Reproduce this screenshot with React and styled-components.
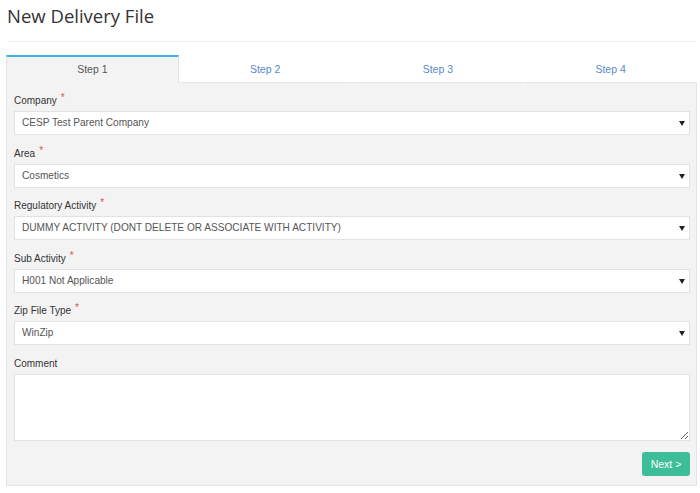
import React from "react"
import styled, { createGlobalStyle } from "styled-components"

const Global = createGlobalStyle`
  body {
    margin: 0;
    background: #fff;
    font-family: "Liberation Sans", Arial, sans-serif;
  }
`

const Page = styled.div`
  padding: 0 4px 0 7px;
  width: 690px;
`

const Title = styled.h1`
  margin: 0;
  padding-top: 2px;
  height: 39px;
  font-family: "Open Sans", sans-serif;
  font-weight: 400;
  font-size: 18.5px;
  color: #333;
  line-height: 28px;
  border-bottom: 1px solid #eeeeee;
`

const Tabs = styled.div`
  display: grid;
  grid-template-columns: repeat(4, 1fr);
  margin-top: 13px;
  margin-left: -1px;
`

const Tab = styled.div`
  height: 25px;
  line-height: 25px;
  text-align: center;
  font-size: 10.5px;
  color: ${(p) => (p.$active ? "#555" : "#5a8ac6")};
  background: ${(p) => (p.$active ? "#f3f3f3" : "#fff")};
  border-top: 2px solid ${(p) => (p.$active ? "#3cb4e5" : "transparent")};
  border-left: 1px solid ${(p) => (p.$active ? "#e4e4e4" : "transparent")};
  border-right: 1px solid ${(p) => (p.$active ? "#e4e4e4" : "transparent")};
  border-bottom: 1px solid ${(p) => (p.$active ? "#f3f3f3" : "#e4e4e4")};
`

const Panel = styled.div`
  margin-left: -1px;
  background: #f3f3f3;
  border: 1px solid #e4e4e4;
  border-top: none;
  padding: 11px 6px 9px 7px;
`

const Field = styled.div`
  margin-bottom: 11.5px;
`

const Label = styled.div`
  font-size: 10px;
  color: #333;
  line-height: 14px;
  margin-bottom: 3px;
`

const Req = styled.span`
  color: #d9534f;
  margin-left: 4px;
  position: relative;
  top: -3px;
`

const SelectBox = styled.div`
  position: relative;
  height: 22px;
  background: #fff;
  border: 1px solid #e2e2e2;
  font-size: 10.1px;
  color: #555;
  line-height: 22px;
  padding-left: 7px;
  &::after {
    content: "";
    position: absolute;
    right: 4px;
    top: 9px;
    border-left: 3px solid transparent;
    border-right: 3px solid transparent;
    border-top: 5px solid #222;
  }
`

const TextArea = styled.textarea`
  display: block;
  box-sizing: border-box;
  width: 100%;
  height: 67px;
  border: 1px solid #e2e2e2;
  background: #fff;
  resize: vertical;
  margin: 0;
  outline: none;
`

const Footer = styled.div`
  display: flex;
  justify-content: flex-end;
  margin-top: 11px;
`

const Button = styled.button`
  width: 48px;
  height: 24px;
  border: none;
  border-radius: 3px;
  background: #3dbd99;
  color: #fff;
  font-family: "Liberation Sans", Arial, sans-serif;
  font-size: 10.5px;
  padding: 0;
`

const fields = [
  ["Company", "CESP Test Parent Company"],
  ["Area", "Cosmetics"],
  ["Regulatory Activity", "DUMMY ACTIVITY (DONT DELETE OR ASSOCIATE WITH ACTIVITY)"],
  ["Sub Activity", "H001 Not Applicable"],
  ["Zip File Type", "WinZip"],
]

export default function App() {
  return (
    <Page>
      <Global />
      <Title>New Delivery File</Title>
      <Tabs>
        <Tab $active>Step 1</Tab>
        <Tab>Step 2</Tab>
        <Tab>Step 3</Tab>
        <Tab>Step 4</Tab>
      </Tabs>
      <Panel>
        {fields.map(([label, value]) => (
          <Field key={label}>
            <Label>
              {label}
              <Req>*</Req>
            </Label>
            <SelectBox>{value}</SelectBox>
          </Field>
        ))}
        <Label>Comment</Label>
        <TextArea />
        <Footer>
          <Button>Next &gt;</Button>
        </Footer>
      </Panel>
    </Page>
  )
}
